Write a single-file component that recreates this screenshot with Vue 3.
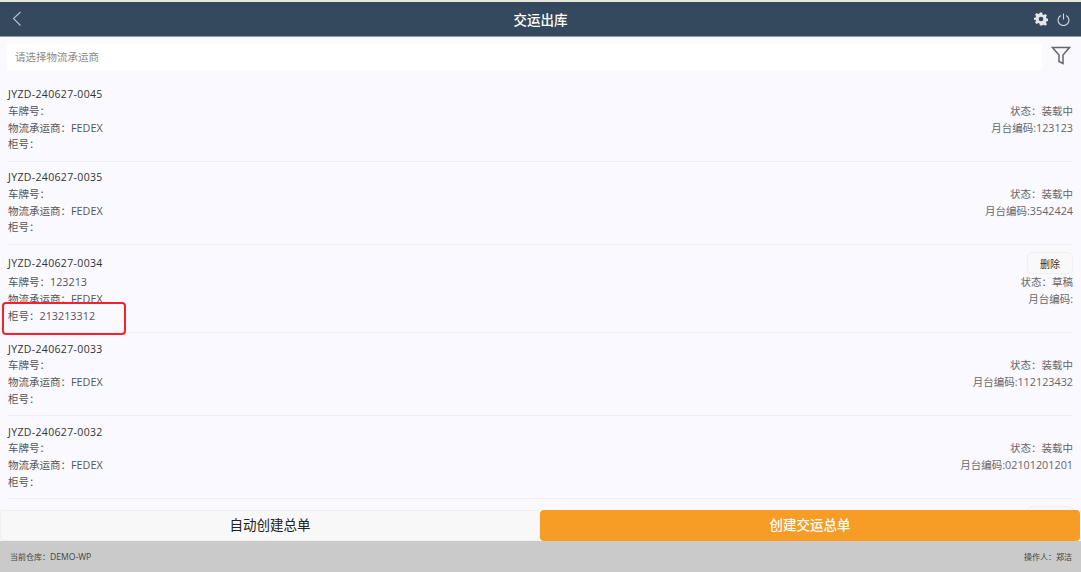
<script setup>
const rows = [
  { id: 'JYZD-240627-0045', plate: '', carrier: 'FEDEX', box: '', status: '装载中', dock: '123123' },
  { id: 'JYZD-240627-0035', plate: '', carrier: 'FEDEX', box: '', status: '装载中', dock: '3542424' },
  { id: 'JYZD-240627-0034', plate: '123213', carrier: 'FEDEX', box: '213213312', status: '草稿', dock: '', del: true },
  { id: 'JYZD-240627-0033', plate: '', carrier: 'FEDEX', box: '', status: '装载中', dock: '112123432' },
  { id: 'JYZD-240627-0032', plate: '', carrier: 'FEDEX', box: '', status: '装载中', dock: '02101201201' },
  { id: 'JYZD-240627-0031', plate: '', carrier: 'FEDEX', box: '', status: '草稿', dock: '', del: true }
]
</script>

<template>
  <div class="page">
    <header class="top">
      <svg class="back" width="12" height="18" viewBox="0 0 12 18" fill="none" stroke="#b9c2cc" stroke-width="1.1">
        <path d="M9.5 2 L2.5 8.5 L9.5 15.5" />
      </svg>
      <h1 class="title">交运出库</h1>
      <div class="top-icons">
        <svg width="14" height="14" viewBox="0 0 24 24" fill="#e4e7ea">
          <path fill-rule="evenodd" d="M10 1h4l.6 3.2 2 .9 2.8-1.8 2.8 2.8-1.8 2.8.8 2 3.3.6v4l-3.3.6-.8 2 1.8 2.8-2.8 2.8-2.8-1.8-2 .9L14 23h-4l-.6-3.2-2-.9-2.8 1.8-2.8-2.8 1.8-2.8-.8-2L-.5 14v-4l3.3-.6.8-2-1.8-2.8 2.8-2.8 2.8 1.8 2-.9zM12 8a4 4 0 1 0 0 8 4 4 0 0 0 0-8z" />
        </svg>
        <svg width="13" height="13" viewBox="0 0 24 24" fill="none" stroke="#d5dade" stroke-width="2">
          <path d="M7 4.5a10 10 0 1 0 10 0" />
          <path d="M12 1v11" />
        </svg>
      </div>
    </header>

    <div class="search">
      <div class="input">请选择物流承运商</div>
      <svg class="filter" width="20" height="19" viewBox="0 0 20 19" fill="none" stroke="#666" stroke-width="1.5">
        <path d="M1.5 1.5 H18.5 L12 9 V17.5 L8 15.5 V9 Z" />
      </svg>
    </div>

    <main class="list">
      <section v-for="r in rows" :key="r.id" class="row">
        <div class="row-head" :class="{ tall: r.del }">
          <span class="id">{{ r.id }}</span>
          <button v-if="r.del" class="del" type="button">删除</button>
        </div>
        <div class="row-body">
          <div class="left">
            <div class="line">车牌号：<span v-if="r.plate" class="val">{{ r.plate }}</span></div>
            <div class="line">物流承运商：<span class="val">{{ r.carrier }}</span></div>
            <div class="line">柜号：<span v-if="r.box" class="val">{{ r.box }}</span></div>
          </div>
          <div class="right">
            <div class="line">状态：{{ r.status }}</div>
            <div class="line">月台编码:<span class="val">{{ r.dock }}</span></div>
          </div>
        </div>
      </section>

      <div class="actions">
        <button class="act plain" type="button">自动创建总单</button>
        <button class="act primary" type="button">创建交运总单</button>
      </div>
    </main>

    <footer class="status">
      <span>当前仓库：<span class="wh">DEMO-WP</span></span>
      <span>操作人：郑洁</span>
    </footer>

    <div class="mark"></div>
  </div>
</template>

<style>
html, body { margin: 0; padding: 0; }
</style>

<style scoped>
.page {
  position: relative;
  display: flex;
  flex-direction: column;
  width: 1081px;
  height: 572px;
  overflow: hidden;
  background: #faf9ff;
  font-family: "Open Sans", "Noto Sans CJK SC", sans-serif;
  font-size: 10.5px;
  color: #555;
}
.top {
  flex: none;
  margin-top: 2px;
  box-shadow: 0 -2px 0 #e6e9dc;
  border-bottom: 1px solid #8c99a6;
  box-sizing: border-box;
  height: 35px;
  background: #34495e;
  display: grid;
  grid-template-columns: 1fr auto 1fr;
  align-items: center;
  padding: 0 11px;
  color: #fff;
}
.back { justify-self: start; }
.title {
  margin: 0;
  font-size: 13.5px;
  font-weight: 500;
  color: #fff;
}
.top-icons {
  justify-self: end;
  display: flex;
  align-items: center;
  gap: 9px;
}
.search {
  flex: none;
  display: flex;
  align-items: center;
  height: 26px;
  margin-top: 7px;
  padding-left: 7px;
}
.input {
  width: 1027px;
  height: 26px;
  padding-left: 8px;
  background: #fff;
  line-height: 26px;
  color: #8a8a8a;
}
.filter { margin-left: 9px; margin-top: -3px; }
.list {
  position: relative;
  flex: 1;
  min-height: 0;
  overflow: hidden;
  padding: 8.7px 8px 0;
}
.row {
  padding: 7.4px 0;
  border-bottom: 1px solid #eeeef4;
}
.row-head {
  display: flex;
  align-items: center;
  justify-content: space-between;
  min-height: 16.8px;
}
.row-head.tall { min-height: 22.1px; }
.id { color: #333; letter-spacing: 0.35px; }
.del {
  width: 46px;
  height: 22px;
  padding: 0;
  border: 1px solid #f0f0f2;
  border-radius: 5px;
  background: #f9f9f9;
  font: inherit;
  font-size: 10px;
  color: #333;
}
.row-body {
  display: flex;
  justify-content: space-between;
}
.line { height: 16.8px; line-height: 16.8px; white-space: nowrap; }
.right { text-align: right; color: #666; }
.val { font-size: 10.8px; }
.actions {
  position: absolute;
  left: 0;
  right: 0;
  bottom: 0;
  display: flex;
  height: 31px;
}
.act {
  width: 540px;
  height: 31px;
  border: none;
  padding: 0 0 3px;
  font: inherit;
  font-size: 13.5px;
  border-radius: 4px;
}
.plain { background: #f8f8f8; color: #222; box-shadow: inset 0 0 0 1px #efefef; }
.primary { background: #f79c24; color: #fff; font-weight: 500; }
.status {
  flex: none;
  display: flex;
  justify-content: space-between;
  align-items: center;
  height: 31px;
  padding: 0 9px 0 10px;
  background: #cacaca;
  font-size: 8px;
  line-height: 12px;
  color: #444;
}
.wh { font-size: 8.6px; }
.mark {
  position: absolute;
  left: 2px;
  top: 302px;
  width: 120px;
  height: 29px;
  border: 2.5px solid #f5222d;
  border-radius: 4px;
}
</style>
